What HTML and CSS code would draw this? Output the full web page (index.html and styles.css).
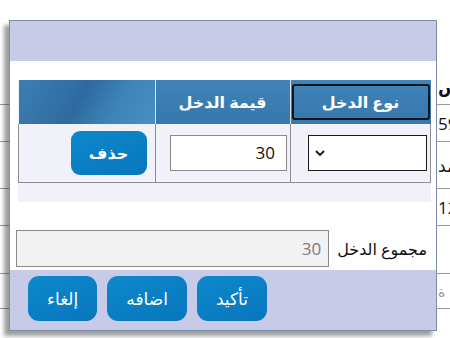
FILE: index.html
```html
<!DOCTYPE html>
<html lang="ar" dir="rtl">

<head>
    <meta charset="UTF-8">
    <title>الدخل</title>
    <link rel="stylesheet" href="styles.css">
</head>

<body>
    <!-- الصفحة خلف النافذة -->
    <div class="page">
        <div class="prow r0"><span class="cell"></span><span class="txt bold">س</span></div>
        <div class="prow r1"><span class="cell"></span><span class="txt num">5900</span></div>
        <div class="prow r2"><span class="cell"></span><span class="txt">محمد</span></div>
        <div class="prow r3"><span class="cell"></span><span class="txt num">1200</span></div>
        <div class="prow r4"><span class="cell"></span><span class="txt"></span></div>
        <div class="prow r5"><span class="cell"></span><span class="txt faint">ة</span></div>
        <div class="prow r6"><span class="cell"></span><span class="txt"></span></div>
    </div>

    <div class="dialog">
        <div class="dlg-head"></div>
        <div class="dlg-body">
            <div class="grid-wrap">
                <table class="income">
                    <tr>
                        <th class="c1"><div class="th-focus">نوع الدخل</div></th>
                        <th class="c2">قيمة الدخل</th>
                        <th class="c3"></th>
                    </tr>
                    <tr>
                        <td class="c1">
                            <div class="select">
                                <svg width="12" height="8" viewBox="0 0 12 8"><path d="M2 2 L6 6 L10 2" fill="none" stroke="#111" stroke-width="1.8"/></svg>
                            </div>
                        </td>
                        <td class="c2"><div class="field">30</div></td>
                        <td class="c3"><button class="btn btn-del">حذف</button></td>
                    </tr>
                </table>
            </div>
            <div class="total">
                <span class="total-label">مجموع الدخل</span>
                <div class="total-field">30</div>
            </div>
        </div>
        <div class="dlg-foot">
            <button class="btn btn-foot">تأكيد</button>
            <button class="btn btn-foot">اضافه</button>
            <button class="btn btn-foot">إلغاء</button>
        </div>
    </div>
</body>

</html>
```

FILE: styles.css
```css
html, body {
    margin: 0;
    padding: 0;
    background: #fff;
    overflow: hidden;
}

body {
    width: 450px;
    height: 338px;
    position: relative;
    font-family: "Open Sans", "DejaVu Sans", sans-serif;
}

/* الجدول الخلفي */
.page {
    padding-top: 68px;
    direction: ltr;
}

.prow {
    display: grid;
    grid-template-columns: 437px 1fr;
    border-bottom: 1px solid #9a9a9a;
    box-sizing: border-box;
    align-items: center;
}

.r0 { height: 37px; }
.r1 { height: 37px; }
.r2 { height: 47px; }
.r3 { height: 37px; }
.r4 { height: 48px; }
.r5 { height: 35px; }
.r6 { height: 30px; }

.txt {
    white-space: nowrap;
    overflow: hidden;
    font-size: 17px;
    color: #111;
    padding-left: 1px;
}

.txt.bold {
    font-weight: bold;
    text-decoration: underline;
}

.txt.faint {
    color: #999;
    font-size: 14px;
}

/* النافذة */
.dialog {
    position: absolute;
    left: 9px;
    top: 20px;
    width: 428px;
    height: 311px;
    box-sizing: border-box;
    border: 1px solid #7f8ca6;
    background: #fff;
    display: flex;
    flex-direction: column;
    box-shadow: -5px 5px 4px rgba(0, 0, 0, 0.38);
}

.dlg-head {
    height: 40px;
    background: #c8cbe8;
}

.dlg-body {
    flex: 1;
    padding: 19px 5px 0 8px;
}

.grid-wrap {
    background: #f1f2f9;
    height: 122px;
}

.income {
    width: 412px;
    border-collapse: collapse;
    table-layout: fixed;
}

.income th {
    height: 40px;
    padding: 0;
    color: #fff;
    font-size: 16px;
    font-weight: bold;
    background: linear-gradient(180deg, #3f83b8, #3677ad);
    border-left: 1px solid #d9e2ee;
}

.income th.c3 {
    border-left: none;
    background: linear-gradient(120deg, #3c7fb4 0%, #2e6aa0 45%, #3d84b8 70%, #4a8fc2 100%);
}

.income th.c1 {
    padding: 2px 1px;
}

.th-focus {
    height: 32px;
    line-height: 32px;
    border: 2px solid #151515;
    border-radius: 3px;
}

.c1 { width: 138px; }
.c2 { width: 134px; }
.c3 { width: 136px; }

.income td {
    height: 58px;
    padding: 0;
    border: 1px solid #8e8e8e;
    border-top: none;
    text-align: center;
}

.select {
    width: 119px;
    height: 36px;
    box-sizing: border-box;
    margin-right: 3px;
    border: 1px solid #1a1a1a;
    background: #fff;
    display: flex;
    align-items: center;
    justify-content: flex-end;
    padding-left: 5px;
}

.field {
    width: 117px;
    height: 36px;
    box-sizing: border-box;
    margin-right: 3px;
    border: 1px solid #8a8a8a;
    background: #fff;
    text-align: left;
    direction: ltr;
    font-size: 17px;
    line-height: 34px;
    padding-left: 85px;
    color: #111;
}

.btn {
    border: none;
    color: #fff;
    font-family: "Open Sans", "DejaVu Sans", sans-serif;
    background: linear-gradient(160deg, #0d88cc, #0876bd);
    cursor: pointer;
}

.btn-del {
    width: 76px;
    height: 44px;
    border-radius: 9px;
    font-size: 16px;
    font-weight: bold;
    margin-right: 8px;
    display: block;
}

.total {
    margin-top: 28px;
    display: flex;
    align-items: center;
    gap: 8px;
}

.total-label {
    font-size: 16px;
    color: #111;
    margin-right: 4px;
    white-space: nowrap;
}

.total-field {
    width: 313px;
    flex-shrink: 0;
    height: 37px;
    box-sizing: border-box;
    border: 1px solid #8a8a8a;
    background: #f2f2f2;
    color: #7a7a7a;
    font-size: 17px;
    line-height: 35px;
    padding-right: 7px;
    text-align: right;
}

.dlg-foot {
    height: 60px;
    background: #c8cbe8;
    display: flex;
    justify-content: flex-end;
    align-items: flex-start;
    gap: 10px;
    padding: 6px 0 0 18px;
    box-sizing: border-box;
}

.btn-foot {
    height: 45px;
    border-radius: 11px;
    font-size: 17px;
    padding: 0 19px;
}
```
